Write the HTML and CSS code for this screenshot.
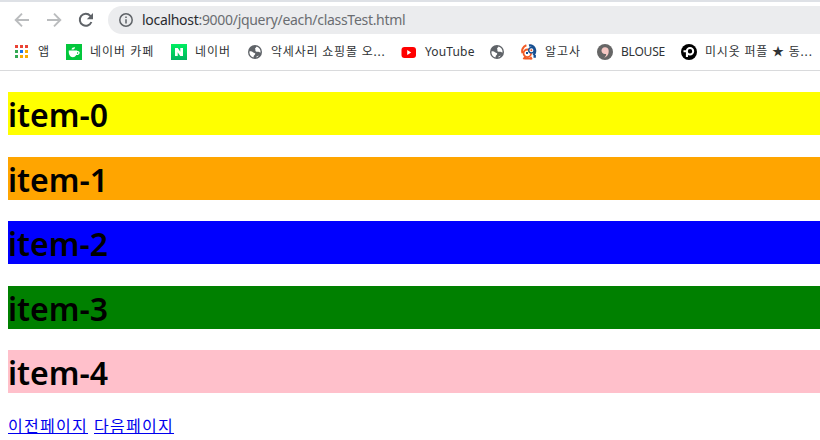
FILE: index.html
```html
<!DOCTYPE html>
<html lang="ko">
<head>
<meta charset="utf-8">
<title>classTest</title>
<link rel="stylesheet" href="styles.css">
</head>
<body>
<header class="browser">
  <div class="toolbar">
    <svg class="nav" viewBox="0 0 16 16"><path class="arrow" d="M15 8H2M8 1.7L1.7 8L8 14.3"/></svg>
    <svg class="nav" viewBox="0 0 16 16"><path class="arrow" d="M1 8H14M8 1.7L14.3 8L8 14.3"/></svg>
    <svg class="nav" viewBox="0 0 16 16"><path class="reload" d="M13.4 10A6 6 0 1 1 12.3 3.8L14 5.5"/><path class="dark" d="M15 1V7.2H8.8Z"/></svg>
    <div class="address">
      <svg class="info" viewBox="0 0 14 14"><circle cx="7" cy="7" r="6.2"/><path d="M7 6.2V10.5M7 3.5V5"/></svg>
      <span class="url"><span class="host">localhost</span>:9000/jquery/each/classTest.html</span>
    </div>
  </div>
  <nav class="bookmarks">
    <div class="mark"><svg viewBox="0 0 16 16"><path fill="#ea4335" d="M1 1h3v3H1zM6 1h3v3H6zM11 1h3v3h-3z"/><path fill="#34a853" d="M1 6h3v3H1zM1 11h3v3H1z"/><path fill="#1a73e8" d="M6 6h3v3H6z"/><path fill="#f9ab00" d="M11 6h3v3h-3zM6 11h3v3H6zM11 11h3v3h-3z"/></svg><span>앱</span></div>
    <div class="mark"><svg viewBox="0 0 16 16"><path fill="#03c73c" d="M0 0h16v16H0z"/><path fill="#fff" d="M2.8 6.5h8.4v.6c3.4-.7 3.5 4.3-.9 4-1 1.6-2 2.1-3.4 2.1-3 0-4.4-2.8-4.1-6.7zM11 8.2v1.6c1.8 0 1.6-1.9 0-1.6zM5.5 5.5c.3-1.8 1.5-2.4 3.6-2.3-.3 1.7-1.4 2.5-3.6 2.3z"/></svg><span class="wide">네이버 카페</span></div>
    <div class="mark"><svg viewBox="0 0 16 16"><defs><linearGradient id="naver" x2="0" y2="1"><stop stop-color="#00ef61"/><stop offset="1" stop-color="#00b45f"/></linearGradient></defs><path fill="url(#naver)" d="M0 0h16v16H0z"/><path fill="#fff" d="M4 4h2.8l2.5 3.8V4H12v8H9.2L6.7 8.2V12H4z"/></svg><span class="wide">네이버</span></div>
    <div class="mark"><svg viewBox="0 0 16 16"><circle class="dark" cx="8" cy="8" r="7"/><path class="land" d="M2.4 7.5C4 6.9 5 7.3 6 8.2S8.5 8.5 8.2 10 6.8 11 6.6 12.8L6.4 13.5C3.9 12.9 2.2 10.6 2.4 7.5zM9.3 2.6c2.7.7 4.4 2.9 4.3 5.8-1.2.3-1.7-.8-3-.6-1.1.2-2.6-.6-2.2-1.6.3-.7-.5-1-.3-1.7.2-.8 1.3-.8 1.2-1.9zM9.5 12.6l2.4-1c-.7.9-1.5 1.5-2.4 1.8z"/></svg><span class="long">악세사리 쇼핑몰 오...</span></div>
    <div class="mark"><svg viewBox="0 0 16 16"><rect x=".5" y="3" width="14.5" height="11" rx="3" fill="#f00"/><path fill="#fff" d="M6.2 6v5l4-2.5z"/></svg><span class="youtube">YouTube</span></div>
    <div class="mark"><svg viewBox="0 0 16 16"><circle class="dark" cx="8" cy="8" r="7"/><path class="land" d="M2.4 7.5C4 6.9 5 7.3 6 8.2S8.5 8.5 8.2 10 6.8 11 6.6 12.8L6.4 13.5C3.9 12.9 2.2 10.6 2.4 7.5zM9.3 2.6c2.7.7 4.4 2.9 4.3 5.8-1.2.3-1.7-.8-3-.6-1.1.2-2.6-.6-2.2-1.6.3-.7-.5-1-.3-1.7.2-.8 1.3-.8 1.2-1.9zM9.5 12.6l2.4-1c-.7.9-1.5 1.5-2.4 1.8z"/></svg></div>
    <div class="mark"><svg viewBox="0 0 16 16" fill="none"><path stroke="#f15a24" stroke-width="2" d="M5.4 1.3C2 2.5.3 6 1.5 9.2M4.2 12.8l-1.7 2.5M9.5 13l1.2 2.5M4 14.4h6"/><path stroke="#174f91" stroke-width="2.4" d="M8 1.5c5-.8 8 5 4.6 9.8M13.7 11v2.7"/><circle cx="6.3" cy="9.3" r="3.8" stroke="#f15a24" stroke-width="1.8"/><circle cx="10.4" cy="6.2" r="2.7" fill="#fff" stroke="#174f91" stroke-width="1.4"/><path fill="#174f91" d="M5 8h2v2H5z"/><path fill="#f15a24" d="M9.5 5.4h1.7v1.7H9.5z"/></svg><span class="wide">알고사</span></div>
    <div class="mark"><svg viewBox="0 0 16 16"><circle cx="8" cy="8" r="8" fill="#666"/><path fill="#f5c7c3" d="M4.5 6.5a3.6 3.6 0 0 1 7.1-.5c.5 3.6-1 6.6-4.4 7.7 1.3-1.3 2-2.4 1.9-3.8-2.4.7-4.6-.8-4.6-3.4z"/></svg><span class="blouse">BLOUSE</span></div>
    <div class="mark"><svg viewBox="0 0 16 16"><circle cx="8" cy="8" r="8"/><circle cx="9" cy="7.2" r="3.2" fill="none" stroke="#fff" stroke-width="2"/><path fill="#fff" d="M2.5 6.2H6v2H2.5zM4.9 7.5H7V13H4.9z"/></svg><span class="long">미시옷 퍼플 ★ 동...</span></div>
  </nav>
</header>
<main>
  <h1 class="yellow">item-0</h1>
  <h1 class="orange">item-1</h1>
  <h1 class="blue">item-2</h1>
  <h1 class="green">item-3</h1>
  <h1 class="pink">item-4</h1>
  <div class="links"><a href="#">이전페이지</a><a href="#">다음페이지</a></div>
</main>
</body>
</html>
```
FILE: styles.css
```css
* { box-sizing: border-box; }
body { margin: 0; height: 440px; overflow: hidden; background: #fff; color: #000; font-family: "Noto Sans", "Noto Sans CJK KR", sans-serif; }
.browser { height: 71px; border-top: 2px solid #dee1e6; border-bottom: 1px solid #d9dadc; }
.toolbar { display: flex; align-items: center; height: 36px; padding-left: 14px; }
.nav { width: 16px; height: 16px; margin-right: 16px; flex: none; }
.nav:nth-of-type(3) { margin-right: 14px; }
.arrow { fill: none; stroke: #babcbe; stroke-width: 1.9; }
.reload { fill: none; stroke: #5f6368; stroke-width: 2; }
.dark { fill: #5f6368; }
.land { fill: #fff; }
.address { display: flex; align-items: center; flex: 1; height: 28px; padding-left: 11px; border-radius: 14px 0 0 14px; background: #ebecee; }
.info { width: 14px; height: 14px; margin-right: 9px; fill: none; stroke: #5f6368; stroke-width: 1.5; }
.url { font-size: 14px; line-height: 20px; color: #6a6d71; white-space: nowrap; letter-spacing: -.3px; }
.host { color: #292b2e; }
.bookmarks { display: grid; grid-template-columns: 52px 105px 76px 154px 88px 32px 76px 84px 139px; height: 28px; padding-left: 14px; }
.mark { display: flex; align-items: center; gap: 8px; height: 28px; font-size: 12px; line-height: 18px; color: #303336; white-space: nowrap; }
.mark svg { width: 16px; height: 16px; flex: none; }
.wide { letter-spacing: 1px; }
.long { letter-spacing: .8px; }
.youtube { letter-spacing: .15px; }
.blouse { letter-spacing: -.2px; }
h1 { height: 43px; margin: 0 0 21.44px 8px; font-size: 32px; line-height: 46px; font-weight: 600; font-family: "Noto Sans", sans-serif; }
main { padding-top: 21.44px; }
.yellow { background: yellow; }
.orange { background: orange; }
.blue { background: blue; }
.green { background: green; }
.pink { background: pink; }
.links { display: flex; gap: 6px; margin-left: 8px; font-size: 16px; line-height: 21px; font-family: "Noto Sans CJK KR", sans-serif; letter-spacing: 1.28px; }
.links a { color: #0000ee; text-underline-offset: 1px; }
```
